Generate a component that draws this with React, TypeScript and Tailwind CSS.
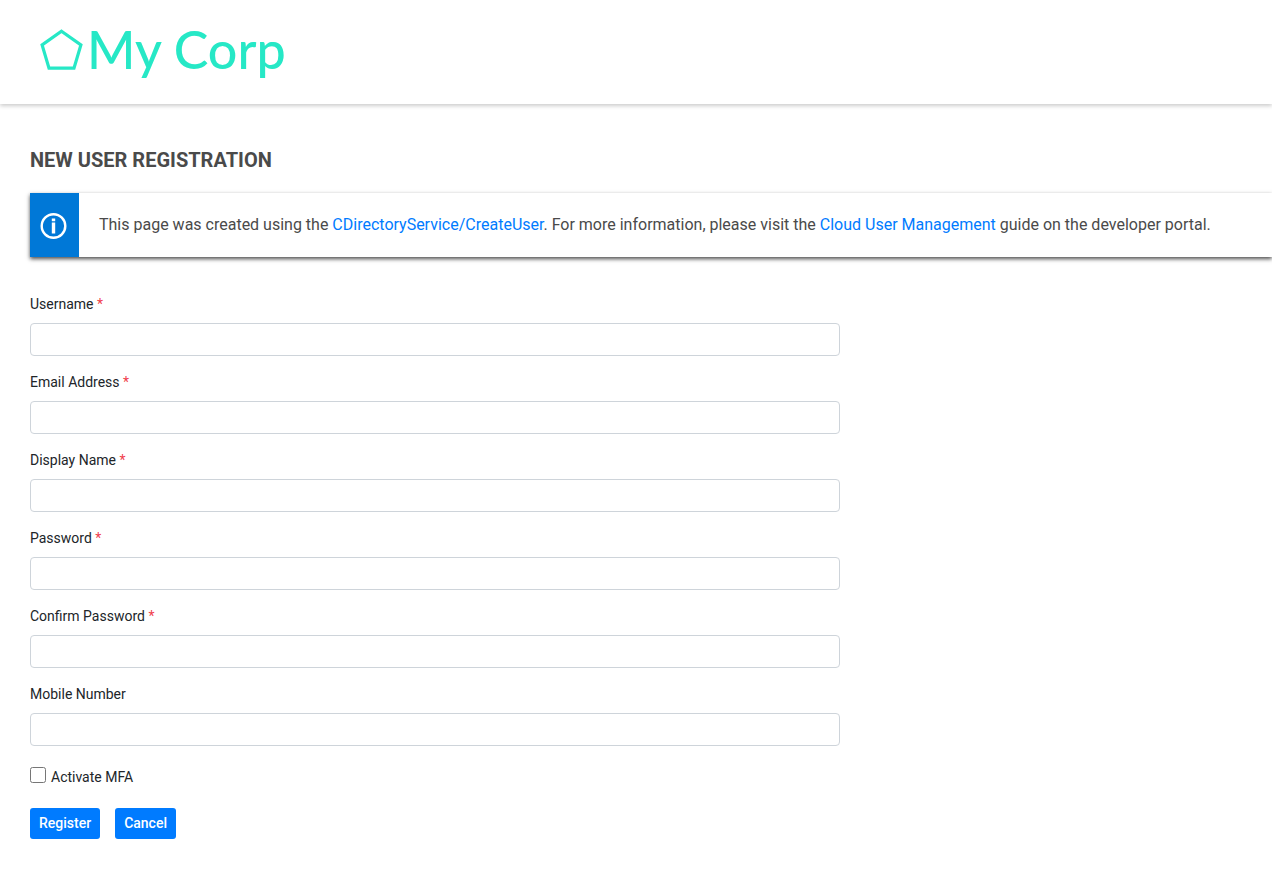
import React from "react";

const FIELDS = [
  { id: "username", label: "Username", type: "text", required: true },
  { id: "email", label: "Email Address", type: "email", required: true },
  { id: "display", label: "Display Name", type: "text", required: true },
  { id: "password", label: "Password", type: "password", required: true },
  { id: "confirm", label: "Confirm Password", type: "password", required: true },
  { id: "mobile", label: "Mobile Number", type: "tel", required: false },
];

function Header() {
  return (
    <header className="flex h-[104px] items-start bg-white pl-10 shadow-[0_2px_4px_rgba(0,0,0,0.2)]">
      <div className="flex items-start pt-5 text-[#26e8c6]">
        <svg className="mt-[9px] h-[42px] w-[43px]" viewBox="0 0 43 42" fill="none" stroke="currentColor" strokeWidth="3.2" aria-hidden="true">
          <path d="M21.5 2.3 L40.9 16 L34 39.2 L9 39.2 L2.1 16 Z" />
        </svg>
        <span className="ml-1 font-['Lato'] text-[52px] leading-[58px] font-medium whitespace-nowrap">My Corp</span>
      </div>
    </header>
  );
}

function InfoBanner() {
  return (
    <div className="flex h-16 shadow-[0_2px_4px_rgba(0,0,0,0.7)]">
      <div className="flex w-[49px] shrink-0 items-center justify-center bg-[#0078d7] pt-px pr-px text-white">
        <svg className="h-7 w-7" viewBox="0 0 28 28" fill="none" stroke="currentColor" aria-hidden="true">
          <circle cx="13.5" cy="14" r="11.8" strokeWidth="2.4" />
          <path d="M13.5 10.5v11M13.5 6.5v2.8" strokeWidth="3.4" />
        </svg>
      </div>
      <p className="px-5 pt-5 text-base leading-6 whitespace-nowrap text-[#4a4a4a]">
        This page was created using the{" "}
        <a href="#create-user" className="text-[#007bff]">CDirectoryService/CreateUser</a>. For more information, please visit the{" "}
        <a href="#guide" className="text-[#007bff]">Cloud User Management</a> guide on the developer portal.
      </p>
    </div>
  );
}

export default function App() {
  return (
    <div className="overflow-x-hidden bg-white font-['Roboto',sans-serif] text-sm text-[#212529]">
      <Header />
      <main className="pt-11 pl-[30px]">
        <h1 className="text-xl leading-6 font-bold text-[#4a4a4a]">NEW USER REGISTRATION</h1>
        <div className="mt-[21px]">
          <InfoBanner />
        </div>
        <form className="mt-[37px] w-[810px] max-w-full" onSubmit={(e) => e.preventDefault()}>
          {FIELDS.map((f) => (
            <div key={f.id} className="mb-4">
              <label htmlFor={f.id} className="mb-2 block leading-[21px]">
                {f.label}
                {f.required && <span className="text-[#f0404c]"> *</span>}
              </label>
              <input id={f.id} type={f.type} className="block h-[33px] w-full rounded-sm border border-[#ced4da] bg-white px-2 text-sm" />
            </div>
          ))}
          <div className="mt-5 flex items-start gap-[5px]">
            <input id="mfa" type="checkbox" className="mt-px h-4 w-4" />
            <label htmlFor="mfa" className="leading-[22px]">Activate MFA</label>
          </div>
          <div className="mt-5 flex gap-[15px] pb-9">
            <button type="submit" className="h-[31px] rounded-[3px] bg-[#007bff] px-2 pb-0.5 text-sm font-medium text-white">
              <span className="px-px">Register</span>
            </button>
            <button type="button" className="h-[31px] rounded-[3px] bg-[#007bff] px-2 pb-0.5 text-sm font-medium text-white">
              <span className="px-px">Cancel</span>
            </button>
          </div>
        </form>
      </main>
    </div>
  );
}
